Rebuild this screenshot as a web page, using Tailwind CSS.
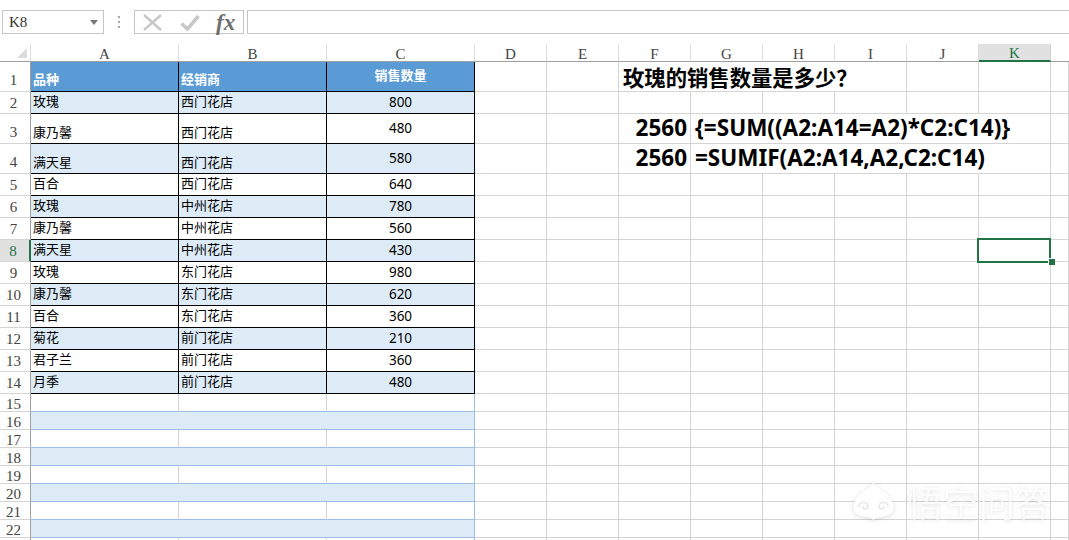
<!DOCTYPE html>
<html lang="en">
<head>
    <meta charset="UTF-8">
    <title>销售数量</title>
    <script src="https://cdn.jsdelivr.net/npm/@tailwindcss/browser@4"></script>
</head>
<body class="bg-white overflow-hidden">
<div class="relative w-[1069px] h-[540px] overflow-hidden bg-white font-['Noto_Sans','Noto_Sans_CJK_SC',sans-serif] text-black">

    <!-- Formula bar -->
    <div class="flex items-center h-[44px]">
        <div class="flex items-center justify-between w-[102px] h-[24px] ml-[2px] border border-[#c6c6c6] pl-[6px] pr-[5px] font-['Liberation_Serif',serif] text-[15px] text-[#333]">
            <span class="pt-[1px]">K8</span>
            <svg width="8" height="5" viewBox="0 0 8 5"><polygon points="0,0 8,0 4,5" fill="#777"/></svg>
        </div>
        <div class="flex flex-col gap-[3px] w-[2px] ml-[14px] mr-[14px]">
            <span class="block w-[2px] h-[2px] bg-[#a6a6a6]"></span>
            <span class="block w-[2px] h-[2px] bg-[#a6a6a6]"></span>
            <span class="block w-[2px] h-[2px] bg-[#a6a6a6]"></span>
        </div>
        <div class="flex items-center w-[110px] h-[24px] border border-[#c6c6c6] relative">
            <svg class="ml-[8px]" width="19" height="17" viewBox="0 0 19 17"><path d="M1 1 L18 16 M18 1 L1 16" stroke="#c8c8c8" stroke-width="2.4" fill="none"/></svg>
            <svg class="ml-[18px]" width="20" height="17" viewBox="0 0 20 17"><path d="M1.5 9.5 L7.5 15 L18.5 2" stroke="#c8c8c8" stroke-width="3.6" fill="none"/></svg>
            <span class="ml-[16px] font-['Liberation_Serif',serif] italic font-bold text-[23px] leading-none text-[#6f6f6f]">fx</span>
        </div>
        <div class="flex-1 h-[24px] ml-[3px] border-y border-l border-[#c6c6c6]"></div>
    </div>

    <!-- Sheet -->
    <div id="sheet" class="grid grid-cols-[31px_148px_148px_148px_repeat(8,72px)_18px] grid-rows-[18px_30px_22px_30px_30px_repeat(10,22px)_repeat(9,18px)] text-[13px]"></div>

    <!-- Selected cell K8 -->
    <div class="absolute left-[977px] top-[238px] w-[74px] h-[25px] border-2 border-[#217346]"></div>
    <div class="absolute left-[1048px] top-[258px] w-[6px] h-[6px] bg-[#217346] border-l border-t border-white box-content"></div>

    <!-- Watermark -->
    <div class="absolute left-[852px] top-[482px] flex items-center gap-[12px] [filter:drop-shadow(0_1px_2px_rgba(0,0,0,0.14))]">
        <svg width="43" height="38" viewBox="0 0 43 38">
            <path d="M21.5 0 C24 6 34 9 39 17 C44 25 42 32 34 34 C29 35 25 35 21.5 38 C18 35 14 35 9 34 C1 32 -1 25 4 17 C9 9 19 6 21.5 0 Z" fill="#fff"/>
            <path d="M7 25 C7 19 16 19 16 24 C16 28 10 28 11 24 M36 25 C36 19 27 19 27 24 C27 28 33 28 32 24" stroke="#e8e8e8" stroke-width="1.6" fill="none"/>
        </svg>
        <span class="font-['Noto_Sans_CJK_SC',sans-serif] font-light text-[36px] leading-[38px] text-white">悟空问答</span>
    </div>
</div>

<script>
    const rows = [
        ['玫瑰', '西门花店', 800], ['康乃馨', '西门花店', 480], ['满天星', '西门花店', 580],
        ['百合', '西门花店', 640], ['玫瑰', '中州花店', 780], ['康乃馨', '中州花店', 560],
        ['满天星', '中州花店', 430], ['玫瑰', '东门花店', 980], ['康乃馨', '东门花店', 620],
        ['百合', '东门花店', 360], ['菊花', '前门花店', 210], ['君子兰', '前门花店', 360],
        ['月季', '前门花店', 480]
    ];
    const grid = 'border-r border-b border-[#d4d4d4]';
    const ink = 'border-r border-b border-black';
    const bold = 'font-bold text-[22.5px] whitespace-nowrap pb-[1px]';
    let html = '';

    function cell(cls, text) {
        html += `<div class="flex min-w-0 ${cls}">${text === undefined ? '' : text}</div>`;
    }

    // Column headers (L is only a sliver at the right edge, its letter is off screen)
    cell('border-r border-b border-r-[#dcdcdc] border-b-[#9f9f9f] relative', '<svg class="absolute left-[17px] top-[4px]" width="10" height="10"><polygon points="0,10 10,0 10,10" fill="#dcdcdc"/></svg>');
    'ABCDEFGHIJK'.split('').forEach(c => {
        const selected = c === 'K';
        const cls = selected
            ? 'bg-[#e1e1e1] border-r border-r-[#cfcfcf] border-b-2 border-b-[#217346] text-[#217346]'
            : 'border-r border-b border-r-[#dcdcdc] border-b-[#9f9f9f] text-[#444]';
        cell(`${cls} items-center justify-center pt-[2px] font-['Liberation_Serif',serif] text-[15px] leading-[16px]`, c);
    });
    cell('border-b border-b-[#9f9f9f]');

    for (let r = 1; r <= 23; r++) {
        const tall = r === 1 || r === 3 || r === 4;
        // Row header, 23 only shows its top two pixels so it gets no label
        const headAlign = tall ? 'items-end pb-[3px]' : r >= 15 ? 'items-center pt-[3px]' : 'items-center';
        const headCls = r === 8
            ? 'bg-[#e1e1e1] border-r-2 border-b border-r-[#217346] border-b-[#d4d4d4] text-[#217346]'
            : 'border-r border-b border-r-[#9f9f9f] border-b-[#d4d4d4] text-[#444]';
        cell(`${headCls} ${headAlign} justify-center pr-[3px] font-['Liberation_Serif',serif] text-[15px] leading-[16px]`, r < 23 ? r : '');

        // Table columns A-C
        if (r === 1) {
            cell(`${ink} bg-[#5b9bd5] items-end pl-[2px] pb-[2px] text-white font-bold`, '品种');
            cell(`${ink} bg-[#5b9bd5] items-end pl-[2px] pb-[2px] text-white font-bold`, '经销商');
            cell(`${ink} bg-[#5b9bd5] items-center justify-center pb-[1px] text-white font-bold`, '销售数量');
        } else if (r <= 14) {
            const row = rows[r - 2];
            const bg = r % 2 === 0 ? 'bg-[#ddebf7]' : 'bg-white';
            const align = tall ? 'items-end' : 'items-center';
            cell(`${ink} ${bg} ${align} pl-[2px] pb-[1px]`, row[0]);
            cell(`${ink} ${bg} ${align} pl-[2px] pb-[1px]`, row[1]);
            cell(`${ink} ${bg} items-center justify-center text-[13.5px]`, row[2]);
        } else if (r % 2 === 0 && r < 23) {
            cell('col-span-3 bg-[#ddebf7] border-r border-b border-[#9dbde6]');
        } else {
            cell('border-r border-b border-r-[#d4d4d4] border-b-[#9dbde6]');
            cell('border-r border-b border-r-[#d4d4d4] border-b-[#9dbde6]');
            cell('border-r border-b border-r-[#9dbde6] border-b-[#9dbde6]');
        }

        // Free columns D-L, with the merged text cells on rows 1, 3 and 4
        cell(grid); cell(grid);
        if (r === 1) {
            cell(`${grid} col-span-4 items-center pl-[4px] font-['Noto_Sans_CJK_SC',sans-serif] font-bold text-[21.33px] whitespace-nowrap`, '玫瑰的销售数量是多少？');
            cell(grid); cell(grid); cell(grid);
        } else if (r === 3 || r === 4) {
            cell(`${grid} items-center justify-end pr-[3px] ${bold}`, '2560');
            cell(`${grid} col-span-5 items-center pl-[4px] ${bold}`, r === 3 ? '{=SUM((A2:A14=A2)*C2:C14)}' : '=SUMIF(A2:A14,A2,C2:C14)');
            cell(grid);
        } else {
            for (let c = 0; c < 7; c++) cell(grid);
        }
    }
    document.getElementById('sheet').innerHTML = html;
</script>
</body>
</html>
